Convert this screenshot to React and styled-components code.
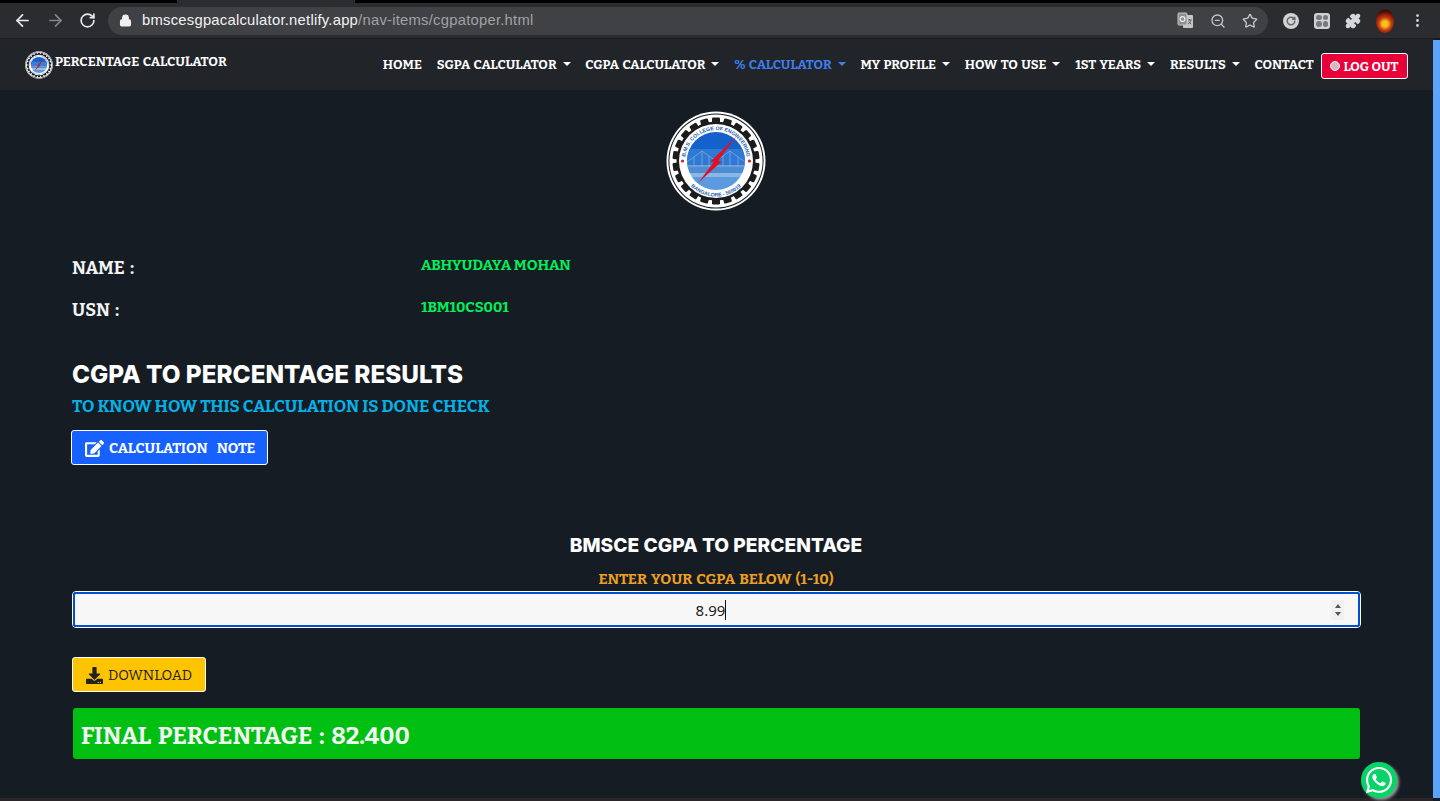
import React from "react";
import styled, { createGlobalStyle } from "styled-components";
import { FaWhatsapp, FaEdit, FaDownload } from "react-icons/fa";
import { ArrowLeft, ArrowRight, RotateCw, Lock, ZoomOut, Star, Puzzle, MoreVertical } from "lucide-react";

const Global = createGlobalStyle`
  html, body { margin: 0; padding: 0; height: 100%; overflow: hidden; background: #151c24; }
  #root { height: 801px; }
`;
const SERIF = `Bitter, "DejaVu Serif Condensed", serif`;

const Shell = styled.div`
  width: 1440px; height: 801px; display: flex; flex-direction: column; overflow: hidden; position: relative; background: #151c24;
`;
const TabStrip = styled.div`height: 3px; background: #000; display: flex; padding-left: 177px;`;
const ActiveTab = styled.div`width: 178px; background: #2b2c2f;`;
const BrowserBar = styled.div`
  height: 36px; background: #2b2c2f; display: flex; align-items: center; padding: 0 8px 0 13px; color: #d9dadb; border-bottom: 1px solid #1b1c1e; box-sizing: border-box;
`;
const NavIcons = styled.div`display: flex; align-items: center; gap: 14px; width: 95px;`;
const Omni = styled.div`
  width: 1160px; height: 28px; border-radius: 14px; background: #404144; display: flex; align-items: center; padding: 0 10px 0 11px; box-sizing: border-box;
  font: 14.8px/1 "Liberation Sans", Roboto, sans-serif; letter-spacing: .24px;
`;
const Host = styled.span`color: #f1f2f3; margin-left: 10px;`;
const Path = styled.span`color: #9fa1a4;`;
const OmniIcons = styled.div`margin-left: auto; display: flex; gap: 16px; align-items: center; color: #c4c6c8;`;
const ExtIcons = styled.div`display: flex; align-items: center; gap: 15px; margin-left: 15px; color: #d6d7d8;`;
const ExtRound = styled.div`width: 16px; height: 16px; border-radius: 50%; background: #d2d3d4; display:flex; align-items:center; justify-content:center;`;
const ExtSquare = styled.div`width: 16px; height: 16px; border-radius: 3px; background: #cfd0d1; display:grid; grid-template-columns: 1fr 1fr; gap: 1px; padding: 2px; box-sizing: border-box;`;
const Dot = styled.i`background: #77797b; border-radius: 50%;`;
const Avatar = styled.div`width: 18px; height: 24px; border-radius: 50%; background: radial-gradient(circle at 50% 62%, #f7c21c 0 16%, #c5370f 38%, #4a0c05 72%);`;

const Main = styled.div`flex: 1; display: flex; min-height: 0;`;
const Page = styled.div`flex: 1; min-width: 0; display: flex; flex-direction: column;`;
const Scrollbar = styled.div`width: 7px; background: #5aa5fb; margin-top: 1px; margin-bottom: 3px;`;

const Navbar = styled.nav`
  height: 51px; background: #212529; display: flex; align-items: center; padding: 0 25px; box-sizing: border-box; flex: none;
`;
const Brand = styled.a`
  display: flex; align-items: center; gap: 2px; color: #fff; font: 700 13.2px/1 ${SERIF}; word-spacing: 1px;
`;
const BrandText = styled.span`margin-top: -5px;`;
const Links = styled.div`margin-left: auto; display: flex; align-items: center;`;
const NavLink = styled.a`
  color: ${p => p.$active ? "#3f7ef0" : "#fff"}; font: 700 13px/1 ${SERIF}; word-spacing: 1px; padding: 0 7.4px; white-space: nowrap; display: flex; align-items: center;
  ${p => p.$caret && `&::after { content: ""; display: inline-block; margin: 0 0 2px 6px; border-top: 4px solid currentColor; border-left: 4px solid transparent; border-right: 4px solid transparent; }`}
`;
const Logout = styled.a`
  height: 26px; width: 87px; box-sizing: border-box; border: 1px solid #fff; border-radius: 3px; background: #ea0039; color: #fff; font: 700 13px/1 ${SERIF};
  display: flex; align-items: center; justify-content: center; gap: 3px; margin-top: 3px;
`;
const LogoutDot = styled.span`width: 10px; height: 10px; border-radius: 50%; background: #d8b8c0; border: 1px solid #fff; box-sizing: border-box;`;

const Content = styled.main`padding: 21px 73px 0 72px; display: flex; flex-direction: column; flex: 1; color: #fff; box-sizing: border-box;`;
const LogoWrap = styled.div`display: flex; justify-content: center; margin-bottom: 40px;`;
const InfoRow = styled.div`display: grid; grid-template-columns: 349px 1fr; height: 42px;`;
const InfoLabel = styled.div`font: 700 18px/24px ${SERIF}; word-spacing: 2px; color: #f3f4f4; padding-top: 5px;`;
const InfoValue = styled.div`font: 700 14.8px/24px ${SERIF}; color: #00f05c; padding-top: 2px;`;
const Heading = styled.h2`margin: 25px 0 0; font: 800 24.3px/29px Inter, sans-serif; color: #fff;`;
const Sub = styled.div`margin-top: 8px; font: 700 17px/20px ${SERIF}; color: #04b2e6;`;
const BtnBase = styled.button`
  box-sizing: border-box; height: 35px; border: 1px solid #fff; border-radius: 3px; display: inline-flex; align-items: center; padding: 2px 0 0; font-family: ${SERIF}; font-size: 14.4px;
`;
const NoteBtn = styled(BtnBase)`margin: 13px 0 0 -1px; width: 197px; background: #1661ff; color: #fff; font-weight: 700; padding-left: 13px; gap: 5px; word-spacing: 6.5px;`;
const Calc = styled.section`margin-top: 65px; display: flex; flex-direction: column; align-items: center;`;
const CalcTitle = styled.h3`margin: 0; font: 800 19.2px/30px Inter, sans-serif; color: #fff; height: 30px;`;
const EnterLabel = styled.div`margin-top: 9px; font: 700 15px/20px ${SERIF}; word-spacing: 1.4px; color: #f0a020;`;
const InputOuter = styled.div`
  margin-top: 2px; width: 1289px; align-self: flex-start; height: 37px; box-sizing: border-box; border: 1px solid #fff; border-radius: 4px; display: flex;
`;
const InputInner = styled.div`
  flex: 1; border: 2px solid #0050d0; border-radius: 3px; background: #f7f7f7; display: flex; align-items: center; color: #222; padding-left: 16px;
  font: 15px/1 "Noto Sans", "Open Sans", sans-serif;
`;
const TypedWrap = styled.span`flex: 1; display: flex; justify-content: center;`;
const Typed = styled.span`border-right: 1px solid #111; line-height: 20px;`;
const Spinner = styled.span`margin-right: 14px; width: 13px; height: 20px; background: #f1f1f1; display: flex; flex-direction: column; align-items: center; justify-content: center; gap: 4px;`;
const Tri = styled.i`
  width: 0; height: 0; border-left: 3px solid transparent; border-right: 3px solid transparent;
  ${p => p.$up ? "border-bottom: 4px solid #555;" : "border-top: 4px solid #555;"}
`;
const DownloadBtn = styled(BtnBase)`margin-top: 29px; width: 134px; background: #ffc400; color: #222; font-weight: 400; padding-left: 13px; gap: 5px;`;
const Result = styled.div`
  margin: 16px 0 0 1px; width: 1287px; height: 51px; border-radius: 3px; background: #00bf13; color: #f2f7f2; font: 700 24.2px/51px ${SERIF}; word-spacing: 2.2px; padding: 2px 0 0 8px; box-sizing: border-box;
`;
const FooterLine = styled.div`height: 3px; background: #2a2627; flex: none; margin-top: auto;`;
const Whats = styled.a`
  position: absolute; left: 1361px; top: 762px; width: 36px; height: 36px; border-radius: 50%; background: #06d468; color: #fff; display: flex; align-items: center; justify-content: center; box-shadow: 2px 2px 3px #999;
`;

function TranslateIcon() {
  return (
    <svg width="17" height="17" viewBox="0 0 17 17" aria-hidden="true">
      <rect x="6" y="3" width="10" height="13" rx="1" fill="#c4c6c8" />
      <rect x="1" y="1" width="9" height="12" rx="1" fill="#8e9092" stroke="#c4c6c8" />
      <circle cx="5.5" cy="7" r="2.4" fill="none" stroke="#eee" strokeWidth="1.1" />
      <path d="M11 8h3.5M12.5 7v1M14 8c-.4 2-1.6 3.3-3 4M11.8 9.5c.6 1.2 1.4 2 2.6 2.6" stroke="#555" strokeWidth=".9" fill="none" />
    </svg>
  );
}

function Logo({ size, id }) {
  const teeth = Array.from({ length: 22 }, (_, i) => (i * 360) / 22);
  return (
    <svg width={size} height={size} viewBox="0 0 100 100" aria-hidden="true">
      <circle cx="50" cy="50" r="49.5" fill="#fff" />
      <circle cx="50" cy="50" r="47.6" fill="#151c24" />
      <circle cx="50" cy="50" r="46.6" fill="#fff" />
      {teeth.map(a => (
        <rect key={a} x="46" y="6.5" width="8" height="10" rx="1.2" fill="#1c1c1c" transform={`rotate(${a} 50 50)`} />
      ))}
      <circle cx="50" cy="50" r="39.5" fill="#1c1c1c" />
      <circle cx="50" cy="50" r="37" fill="#fff" />
      <clipPath id={`${id}c`}><circle cx="50" cy="50" r="29" /></clipPath>
      <g clipPath={`url(#${id}c)`}>
        <rect x="20" y="20" width="60" height="34" fill="#1561cc" />
        <rect x="20" y="38" width="60" height="16" fill="#2f79d6" />
        <rect x="20" y="54" width="60" height="8" fill="#4d8bd4" />
        <rect x="20" y="62" width="60" height="4" fill="#8ab8e6" />
        <rect x="20" y="66" width="60" height="14" fill="#5b9ade" />
        <g stroke="#8fb0d8" strokeWidth=".7" fill="none">
          <path d="M21 54V51L36 40L50 50L64 40L79 51V54" />
          <path d="M36 40V56M64 40V56M28 46V56M43 45V56M57 45V56M72 46V56" />
          <path d="M20 55H80" strokeWidth="1" />
        </g>
      </g>
      <path d="M70 26 L52 50 L55.5 50.5 L32 72 L48 51 L44.5 50.5Z" fill="#e01020" />
      <circle cx="16.5" cy="50" r="1.6" fill="#d02020" />
      <circle cx="83.5" cy="50" r="1.6" fill="#d02020" />
      <path id={`${id}t`} d="M19 50a31 31 0 0 1 62 0" fill="none" />
      <text fontSize="5.2" fontWeight="700" fill="#1f5fae" fontFamily="Liberation Sans, sans-serif">
        <textPath href={`#${id}t`} startOffset="50%" textAnchor="middle">B.M.S. COLLEGE OF ENGINEERING</textPath>
      </text>
      <path id={`${id}b`} d="M15 58a36 36 0 0 0 70 0" fill="none" />
      <text fontSize="5.2" fontWeight="700" fill="#1f5fae" fontFamily="Liberation Sans, sans-serif">
        <textPath href={`#${id}b`} startOffset="50%" textAnchor="middle">BANGALORE - 560019</textPath>
      </text>
    </svg>
  );
}

export default function App() {
  return (
    <Shell>
      <Global />
      <TabStrip><ActiveTab /></TabStrip>
      <BrowserBar>
        <NavIcons>
          <ArrowLeft size={19} strokeWidth={2.2} color="#e8e9ea" />
          <ArrowRight size={19} strokeWidth={2.2} color="#83858a" />
          <RotateCw size={17} strokeWidth={2.4} color="#e8e9ea" />
        </NavIcons>
        <Omni>
          <Lock size={13} strokeWidth={2.5} color="#f0f0f0" fill="#f0f0f0" />
          <Host>bmscesgpacalculator.netlify.app</Host><Path>/nav-items/cgpatoper.html</Path>
          <OmniIcons>
            <TranslateIcon />
            <ZoomOut size={16} />
            <Star size={16} />
          </OmniIcons>
        </Omni>
        <ExtIcons>
          <ExtRound><RotateCw size={10} strokeWidth={3.5} color="#666" /></ExtRound>
          <ExtSquare><Dot /><Dot /><Dot /><Dot /></ExtSquare>
          <Puzzle size={16} fill="currentColor" />
          <Avatar />
          <MoreVertical size={17} />
        </ExtIcons>
      </BrowserBar>
      <Main>
        <Page>
          <Navbar>
            <Brand>
              <Logo size={28} id="small" />
              <BrandText>PERCENTAGE CALCULATOR</BrandText>
            </Brand>
            <Links>
              <NavLink>HOME</NavLink>
              <NavLink $caret>SGPA CALCULATOR</NavLink>
              <NavLink $caret>CGPA CALCULATOR</NavLink>
              <NavLink $caret $active>% CALCULATOR</NavLink>
              <NavLink $caret>MY PROFILE</NavLink>
              <NavLink $caret>HOW TO USE</NavLink>
              <NavLink $caret>1ST YEARS</NavLink>
              <NavLink $caret>RESULTS</NavLink>
              <NavLink>CONTACT</NavLink>
              <Logout><LogoutDot />LOG OUT</Logout>
            </Links>
          </Navbar>
          <Content>
            <LogoWrap><Logo size={100} id="big" /></LogoWrap>
            <InfoRow><InfoLabel>NAME :</InfoLabel><InfoValue>ABHYUDAYA MOHAN</InfoValue></InfoRow>
            <InfoRow><InfoLabel>USN :</InfoLabel><InfoValue>1BM10CS001</InfoValue></InfoRow>
            <Heading>CGPA TO PERCENTAGE RESULTS</Heading>
            <Sub>TO KNOW HOW THIS CALCULATION IS DONE CHECK</Sub>
            <div><NoteBtn><FaEdit size={19} />CALCULATION NOTE</NoteBtn></div>
            <Calc>
              <CalcTitle>BMSCE CGPA TO PERCENTAGE</CalcTitle>
              <EnterLabel>ENTER YOUR CGPA BELOW (1-10)</EnterLabel>
              <InputOuter>
                <InputInner>
                  <TypedWrap><Typed>8.99</Typed></TypedWrap>
                  <Spinner><Tri $up /><Tri /></Spinner>
                </InputInner>
              </InputOuter>
            </Calc>
            <div><DownloadBtn><FaDownload size={17} />DOWNLOAD</DownloadBtn></div>
            <Result>FINAL PERCENTAGE : 82.400</Result>
          </Content>
          <FooterLine />
        </Page>
        <Scrollbar />
      </Main>
      <Whats><FaWhatsapp size={30} /></Whats>
    </Shell>
  );
}
